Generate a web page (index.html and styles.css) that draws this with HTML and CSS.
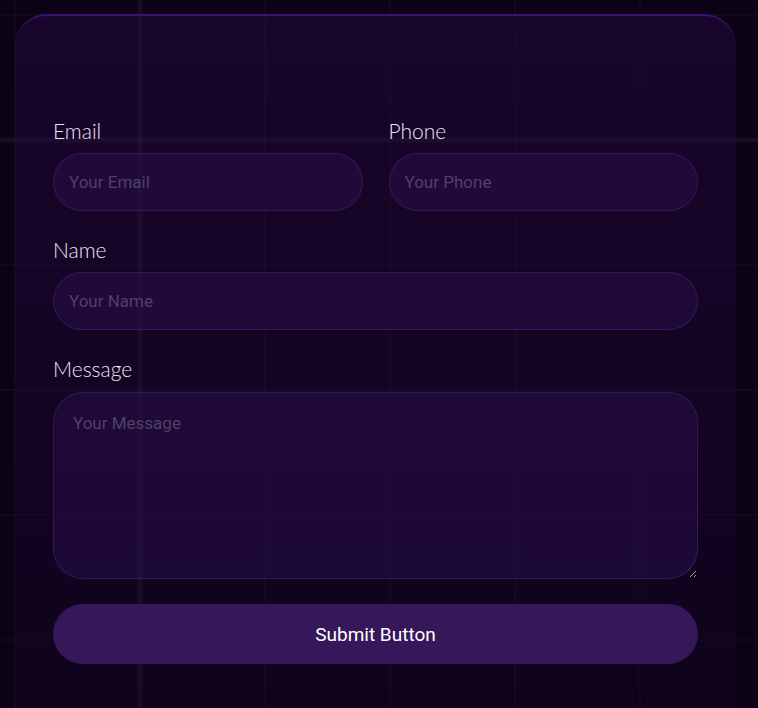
FILE: index.html
```html
<!DOCTYPE html>
<html lang="en">
<head>
    <meta charset="UTF-8">
    <meta name="viewport" content="width=device-width, initial-scale=1.0">
    <title>Contact Form</title>
    <link rel="stylesheet" href="styles.css">
</head>
<body>
    <div class="card">
        <form class="contact-form">
            <div class="row">
                <div class="field">
                    <label for="email">Email</label>
                    <input type="email" id="email" placeholder="Your Email">
                </div>
                <div class="field">
                    <label for="phone">Phone</label>
                    <input type="tel" id="phone" placeholder="Your Phone">
                </div>
            </div>
            <div class="field">
                <label for="name">Name</label>
                <input type="text" id="name" placeholder="Your Name">
            </div>
            <div class="field">
                <label for="message">Message</label>
                <textarea id="message" placeholder="Your Message"></textarea>
            </div>
            <button type="submit">Submit Button</button>
        </form>
    </div>
</body>
</html>
```
FILE: styles.css
```css
body {
    margin: 0;
    padding: 14px 22px 0 15px;
    min-height: 708px;
    box-sizing: border-box;
    font-family: Lato, "Open Sans", sans-serif;
    background-color: #0c0216;
    background-image:
        linear-gradient(to right, rgba(255, 255, 255, 0.035) 6px, transparent 6px),
        linear-gradient(to bottom, rgba(255, 255, 255, 0.035) 6px, transparent 6px),
        linear-gradient(to right, rgba(255, 255, 255, 0.025) 2px, transparent 2px),
        linear-gradient(to bottom, rgba(255, 255, 255, 0.025) 2px, transparent 2px);
    background-size: 758px 708px, 758px 708px, 125px 125px, 125px 125px;
    background-position: 137px 0, 0 137px, 14px 14px, 14px 14px;
    background-repeat: no-repeat, no-repeat, repeat, repeat;
    overflow: hidden;
}

.card {
    background: linear-gradient(to bottom, rgba(40, 10, 70, 0.45), rgba(25, 6, 45, 0.25));
    border-top: 2px solid #3b1270;
    border-radius: 32px 32px 0 0;
    padding: 103px 38px 44px;
}

.contact-form {
    display: flex;
    flex-direction: column;
    gap: 27px;
}

.row {
    display: grid;
    grid-template-columns: 1fr 1fr;
    gap: 26px;
}

.field {
    display: flex;
    flex-direction: column;
}

.field label {
    font-size: 21px;
    font-weight: 300;
    color: #ece4f4;
    line-height: 24px;
    margin-bottom: 10px;
}

.field input,
.field textarea {
    font-family: Roboto, sans-serif;
    font-size: 17px;
    font-weight: 400;
    color: #e8e0f0;
    background-color: rgba(40, 14, 72, 0.55);
    border: 1px solid rgba(80, 40, 130, 0.45);
    border-radius: 30px;
    box-sizing: border-box;
    outline: none;
}

.field input {
    height: 58px;
    padding: 0 15px;
}

.field textarea {
    height: 187px;
    margin-top: 1px;
    padding: 20px 19px;
    resize: vertical;
}

.field input::placeholder,
.field textarea::placeholder {
    color: #51406a;
}

button {
    height: 60px;
    margin-top: -2px;
    border: none;
    border-radius: 30px;
    background-color: #35175a;
    color: #ffffff;
    font-family: Roboto, sans-serif;
    font-size: 19px;
    font-weight: 400;
    cursor: pointer;
}
```
